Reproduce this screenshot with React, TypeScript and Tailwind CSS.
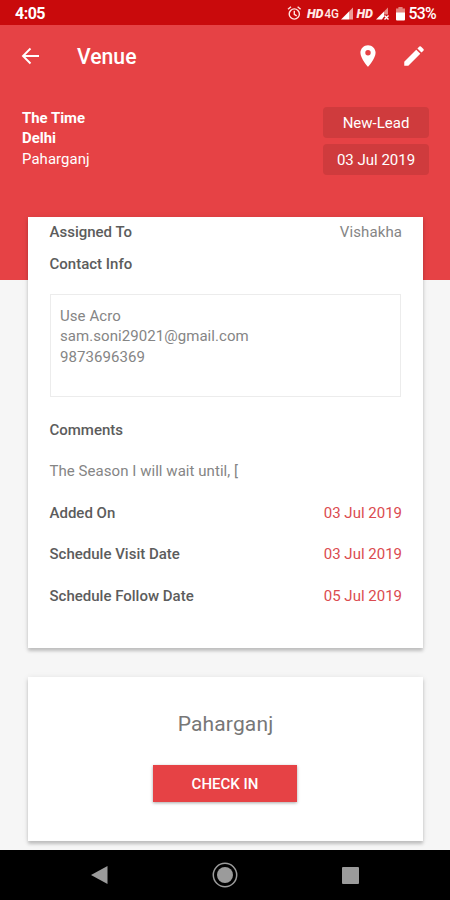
import type { ReactNode } from "react";

function StatusBar() {
  return (
    <div className="flex h-[25px] items-center justify-between bg-[#c90a0c] pr-[14px] pl-[15px] text-white">
      <span className="mt-[3px] text-[16px] leading-none font-bold tracking-[-0.5px]">4:05</span>
      <svg width="122" height="25" viewBox="285 0 122 25" className="ml-auto shrink-0" fill="none">
        <g stroke="#ffe4e1" strokeWidth="1.4">
          <circle cx="292.3" cy="14" r="5.1" />
          <path d="M292.3 10.8v3.6l2.4 1.4M286 9.3l3-2.5M298.6 9.3l-3-2.5" />
        </g>
        <g fill="#ffe9e6" fontFamily="Roboto, sans-serif">
          <text x="305" y="17.6" fontSize="12.5" fontWeight="900" fontStyle="italic" textLength="16.5" lengthAdjust="spacingAndGlyphs">HD</text>
          <text x="322.5" y="17.6" fontSize="12.5" fontWeight="500" textLength="14.5" lengthAdjust="spacingAndGlyphs">4G</text>
          <text x="354.5" y="17.6" fontSize="12.5" fontWeight="900" fontStyle="italic" textLength="16.5" lengthAdjust="spacingAndGlyphs">HD</text>
        </g>
        <path d="M339 19.5L347 11.5v8z" fill="#fff" />
        <path d="M347 11.500L351 7.5v12h-4z" fill="#ed9d98" />
        <path d="M374 19.5l8-8v5l-2 3z" fill="#fff" />
        <path d="M382 11.5L386 7.5v7h-4z" fill="#e98c87" />
        <path d="M382.500 15.500l4 4M386.500 15.500l-4 4" stroke="#fff" strokeWidth="1.4" />
        <path d="M396.4 7h4.2v1.5h2.4V13h-9V8.500h2.400z" fill="#e58580" />
        <path d="M394 12.500h9v7a1 1 0 0 1-1 1h-7a1 1 0 0 1-1-1z" fill="#fff" />
      </svg>
      <span className="mt-[3px] text-[15.800px] leading-none font-medium tracking-[-0.7px]">53%</span>
    </div>
  );
}

function AppBar() {
  return (
    <div className="flex h-[62px] items-center pr-[23px] pl-[18px] text-white">
      <svg width="24" height="24" viewBox="0 0 24 24" className="shrink-0" fill="none" stroke="white" strokeWidth="1.9">
        <path d="M21 12H5M12.500 4.500L5 12l7.500 7.500" />
      </svg>
      <h1 className="mt-[2px] ml-[35px] text-[21.200px] font-medium">Venue</h1>
      <svg width="26" height="26" viewBox="0 0 24 24" className="ml-auto" fill="white">
        <path d="M12 2C8.130 2 5 5.130 5 9c0 5.250 7 13 7 13s7-7.750 7-13c0-3.870-3.130-7-7-7zm0 9.500a2.500 2.500 0 1 1 0-5 2.500 2.500 0 0 1 0 5z" />
      </svg>
      <svg width="26" height="26" viewBox="0 0 24 24" className="ml-[20px]" fill="white">
        <path d="M3 17.250V21h3.750L17.810 9.940l-3.750-3.750L3 17.250zM20.710 7.040a1 1 0 0 0 0-1.410l-2.340-2.340a1 1 0 0 0-1.410 0l-1.830 1.830 3.750 3.750 1.830-1.830z" />
      </svg>
    </div>
  );
}

function Tag({ children }: { children: ReactNode }) {
  return (
    <div className="flex h-[31px] w-[106px] items-center justify-center rounded-[4px] bg-[#cf3b3d] pt-[2px] text-[15px]">
      {children}
    </div>
  );
}

function Row({ label, value }: { label: string; value?: string }) {
  return (
    <div className="flex h-[41.600px] items-center justify-between">
      <span className="font-medium text-[#5c5c5c]">{label}</span>
      {value && <span className="text-[#db4b50]">{value}</span>}
    </div>
  );
}

const cardShadow = "shadow-[0_3px_3px_rgba(0,0,0,0.18),0_1px_6px_rgba(0,0,0,0.1)]";

export default function App() {
  return (
    <div className="flex h-[900px] w-[450px] flex-col overflow-hidden bg-[#f6f6f6] font-[Roboto,sans-serif]">
      <StatusBar />
      <header className="h-[255px] shrink-0 bg-[#e64245] text-white">
        <AppBar />
        <div className="flex justify-between pt-[20px] pr-[21px] pl-[22px]">
          <div className="pt-px text-[14.900px] leading-[20.400px]">
            <p className="font-bold">The Time</p>
            <p className="font-bold">Delhi</p>
            <p className="tracking-[0.1px]">Paharganj</p>
          </div>
          <div className="flex flex-col gap-[6px]">
            <Tag>New-Lead</Tag>
            <Tag>03 Jul 2019</Tag>
          </div>
        </div>
      </header>

      <section className={`relative mx-[28px] mt-[-63px] h-[431px] w-[395px] shrink-0 bg-white pr-[21px] pl-[21.500px] text-[15px] text-[#858585] ${cardShadow}`}>
        <div className="flex h-[31px] items-center justify-between">
          <span className="font-medium text-[#5c5c5c]">Assigned To</span>
          <span className="tracking-[0.1px]">Vishakha</span>
        </div>
        <div className="flex h-[31px] items-center pt-px font-medium text-[#5c5c5c]">Contact Info</div>
        <div className="mt-[15px] mr-px h-[103px] border border-[#ececec] px-[9.500px] pt-[11px] leading-[20.400px] tracking-[0.06px]">
          <p>Use Acro</p>
          <p>sam.soni29021@gmail.com</p>
          <p>9873696369</p>
        </div>
        <div className="mt-[12px]">
          <Row label="Comments" />
          <p className="flex h-[41.600px] items-center tracking-[0.05px]">The Season I will wait until, [</p>
          <Row label="Added On" value="03 Jul 2019" />
          <Row label="Schedule Visit Date" value="03 Jul 2019" />
          <Row label="Schedule Follow Date" value="05 Jul 2019" />
        </div>
      </section>

      <section className={`mx-[28px] mt-[29px] flex h-[164px] w-[395px] shrink-0 flex-col items-center bg-white pt-[31px] ${cardShadow}`}>
        <h2 className="text-[21px] leading-[32px] tracking-[0.150px] text-[#777]">Paharganj</h2>
        <button className="mt-[25px] mr-px h-[37px] w-[144px] bg-[#e64245] pt-px text-[15px] font-medium text-white shadow-[0_1px_3px_rgba(0,0,0,0.35)]">
          CHECK IN
        </button>
      </section>

      <nav className="mt-auto flex h-[50px] shrink-0 items-center bg-black pl-[86px]">
        <svg width="26" height="26" viewBox="0 0 26 26" fill="#9b9b9b">
          <path d="M5 13L21.500 4v18z" />
        </svg>
        <svg width="28" height="28" viewBox="0 0 28 28" className="ml-[99px]">
          <circle cx="14" cy="14" r="11.700" fill="none" stroke="#9b9b9b" strokeWidth="1.500" />
          <circle cx="14" cy="14" r="8" fill="#9b9b9b" />
        </svg>
        <div className="ml-[103px] h-[17px] w-[17px] rounded-[1px] bg-[#9b9b9b]" />
      </nav>
    </div>
  );
}
